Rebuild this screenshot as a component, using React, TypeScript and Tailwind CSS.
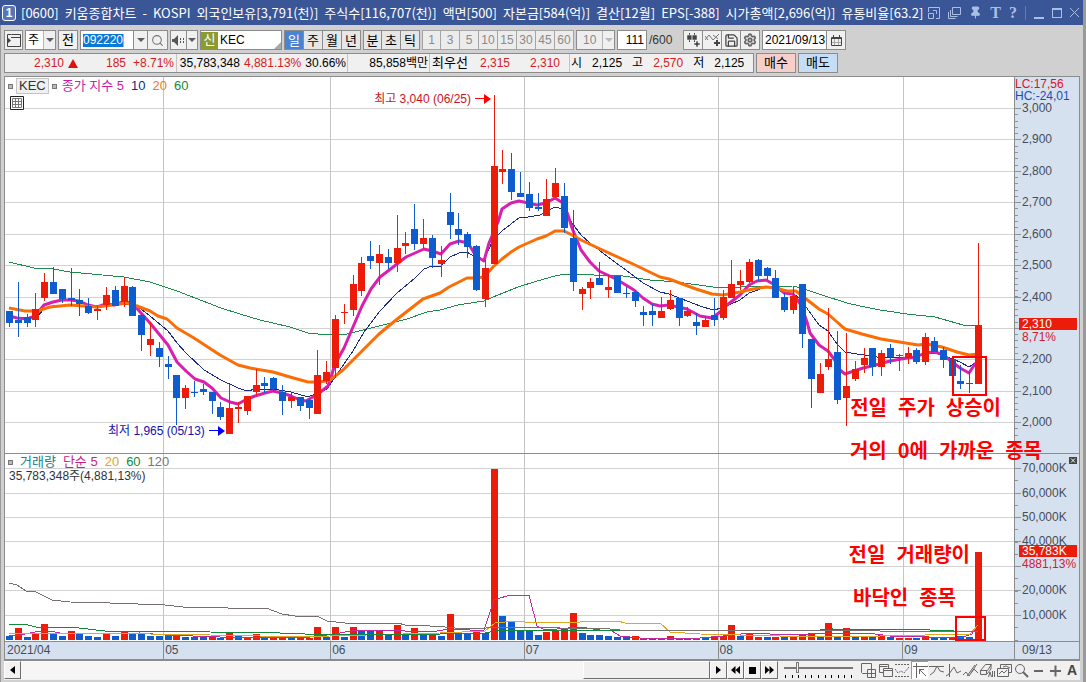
import { useState } from "react";
import type { ReactNode } from "react";
import { Pin, Save, Search, Settings } from "lucide-react";
import clsx from "clsx";
import { twMerge } from "tailwind-merge";

const UP = "#eb1c0a";
const DOWN = "#0f5ccf";

const FIRST_X = 9.5;
const STEP = 8.81;

// direction, wick top, body top, body bottom, wick bottom, volume height, volume direction
type Candle = [string, number, number, number, number, number, string];

const candles: Candle[] = [
  ["d", 311, 311, 323, 327, 4, "d"], ["d", 282, 320, 323, 337, 12, "u"], ["d", 314, 317, 323, 327, 3, "d"],
  ["u", 293, 309, 320, 327, 6, "u"], ["u", 273, 282, 298, 301, 16, "u"], ["d", 267, 282, 294, 294, 6, "d"],
  ["d", 289, 289, 299, 303, 4, "d"], ["d", 268, 298, 300, 306, 9, "u"], ["d", 289, 300, 304, 316, 6, "d"],
  ["d", 298, 306, 313, 314, 4, "d"], ["u", 306, 309, 311, 320, 3, "d"], ["u", 287, 295, 305, 310, 6, "u"],
  ["d", 286, 290, 306, 306, 4, "d"], ["u", 277, 286, 302, 307, 8, "u"], ["d", 286, 287, 316, 316, 6, "d"],
  ["d", 314, 315, 335, 351, 6, "d"], ["u", 322, 339, 345, 356, 4, "d"], ["d", 342, 348, 357, 367, 4, "d"],
  ["d", 356, 364, 367, 379, 4, "d"], ["d", 375, 375, 398, 425, 5, "u"], ["u", 385, 388, 398, 409, 3, "d"],
  ["d", 381, 392, 393, 397, 3, "d"], ["d", 384, 389, 392, 395, 3, "d"], ["d", 392, 392, 401, 414, 4, "u"],
  ["d", 402, 407, 417, 420, 2, "d"], ["u", 384, 408, 434, 434, 8, "u"], ["u", 402, 407, 409, 423, 4, "d"],
  ["u", 396, 396, 411, 415, 3, "u"], ["u", 369, 385, 392, 395, 6, "u"], ["d", 377, 383, 386, 393, 3, "d"],
  ["d", 377, 378, 389, 392, 4, "u"], ["d", 385, 392, 401, 415, 3, "u"], ["u", 393, 397, 401, 408, 2, "d"],
  ["d", 397, 397, 406, 411, 2, "u"], ["d", 399, 400, 408, 419, 2, "u"], ["u", 350, 375, 414, 414, 13, "u"],
  ["u", 361, 372, 381, 384, 3, "d"], ["u", 315, 319, 368, 378, 13, "u"], ["u", 304, 312, 313, 324, 3, "d"],
  ["u", 275, 284, 310, 316, 13, "u"], ["u", 257, 263, 291, 296, 10, "d"], ["d", 241, 256, 261, 269, 10, "d"],
  ["u", 245, 254, 263, 285, 10, "u"], ["d", 249, 257, 263, 269, 6, "d"], ["u", 215, 248, 263, 272, 15, "u"],
  ["u", 232, 243, 246, 254, 5, "d"], ["d", 204, 229, 244, 250, 12, "u"], ["u", 219, 238, 244, 248, 6, "d"],
  ["d", 235, 238, 258, 268, 5, "u"], ["u", 246, 260, 264, 277, 4, "d"], ["d", 193, 212, 225, 239, 26, "u"],
  ["d", 213, 229, 235, 245, 6, "d"], ["d", 232, 234, 247, 258, 6, "d"], ["d", 245, 246, 290, 291, 8, "u"],
  ["u", 260, 268, 299, 307, 7, "d"], ["u", 95, 166, 264, 264, 171, "u"], ["u", 150, 169, 172, 184, 24, "d"],
  ["d", 153, 169, 192, 200, 18, "d"], ["d", 172, 193, 197, 197, 9, "d"], ["d", 182, 194, 208, 211, 10, "d"],
  ["d", 193, 207, 209, 211, 5, "d"], ["u", 179, 199, 216, 216, 8, "u"], ["u", 168, 183, 197, 198, 10, "u"],
  ["d", 183, 196, 228, 233, 12, "u"], ["d", 210, 238, 282, 291, 27, "u"], ["u", 287, 289, 294, 310, 7, "d"],
  ["u", 278, 282, 288, 299, 5, "d"], ["d", 262, 278, 285, 285, 5, "d"], ["u", 275, 287, 290, 298, 4, "d"],
  ["d", 276, 276, 293, 293, 3, "d"], ["d", 287, 293, 294, 298, 3, "d"], ["d", 290, 292, 301, 307, 4, "u"],
  ["d", 306, 312, 315, 326, 2, "u"], ["d", 304, 311, 315, 326, 2, "d"], ["u", 297, 311, 318, 318, 2, "u"],
  ["u", 290, 300, 309, 310, 4, "u"], ["d", 298, 298, 318, 326, 2, "d"], ["u", 307, 311, 316, 317, 2, "d"],
  ["d", 313, 322, 326, 335, 2, "u"], ["u", 317, 320, 327, 327, 2, "d"], ["d", 298, 315, 320, 326, 4, "u"],
  ["u", 290, 297, 318, 320, 4, "u"], ["u", 260, 284, 298, 298, 15, "u"], ["u", 270, 281, 285, 290, 4, "d"],
  ["u", 259, 262, 282, 283, 6, "u"], ["d", 259, 260, 276, 281, 3, "u"], ["d", 267, 268, 276, 280, 3, "d"],
  ["d", 270, 278, 298, 298, 3, "u"], ["d", 293, 297, 310, 312, 3, "d"], ["u", 286, 296, 310, 314, 4, "u"],
  ["d", 284, 284, 334, 348, 6, "u"], ["d", 339, 339, 379, 408, 7, "u"], ["u", 363, 374, 393, 393, 3, "d"],
  ["u", 308, 359, 367, 370, 17, "u"], ["d", 331, 352, 400, 404, 4, "d"], ["u", 333, 386, 398, 426, 12, "u"],
  ["u", 361, 369, 379, 381, 4, "d"], ["u", 348, 358, 365, 373, 4, "u"], ["d", 348, 348, 367, 376, 3, "d"],
  ["u", 350, 353, 367, 376, 5, "u"], ["d", 344, 348, 357, 364, 3, "d"], ["u", 354, 355, 356, 371, 2, "u"],
  ["u", 347, 353, 358, 364, 2, "u"], ["d", 348, 350, 362, 364, 2, "d"], ["u", 333, 337, 362, 365, 4, "u"],
  ["d", 337, 341, 352, 352, 3, "d"], ["d", 347, 350, 360, 368, 2, "d"], ["d", 358, 359, 376, 379, 3, "u"],
  ["d", 365, 381, 384, 389, 4, "d"], ["d", 372, 383, 384, 393, 3, "d"], ["u", 243, 325, 384, 384, 88, "u"],
];

const priceLines = [
  {
    name: "60",
    color: "#1f8a4d",
    width: 1,
    points:
      "9,262 34,268 53,269 70,272 124,277 150,282 177,291 221,308 240,314 260,320 290,327 308,333 327,335 347,334 363,330 387,324 407,319 427,312 440,310 458,305 484,301 493,297 518,287 537,281 555,276 565,274 623,276 650,280 677,282 713,287 740,287 793,286 801,288 822,295 847,303 860,306 880,310 907,314 935,317 963,325 978,326",
  },
  {
    name: "10",
    color: "#1b2a86",
    width: 1,
    points:
      "9,317 26,318 38,316 44,309 53,306 62,305 100,306 133,304 141,309 150,316 168,331 177,343 186,353 204,370 221,380 238,388 247,391 256,389 273,389 291,392 308,397 327,389 333,380 344,364 353,351 364,332 380,311 397,293 415,278 424,269 432,266 441,266 450,257 459,253 467,252 475,257 484,260 493,240 502,231 511,224 519,218 528,217 540,215 555,207 563,209 572,223 581,235 590,243 608,257 634,276 643,283 660,292 669,294 700,306 713,310 722,308 740,300 749,293 766,287 775,288 784,293 793,293 801,300 819,325 828,331 837,344 845,352 857,354 877,357 907,357 920,355 934,353 942,355 960,362 969,367 978,361",
  },
  {
    name: "5",
    color: "#d81fae",
    width: 3,
    points:
      "9,316 17,318 27,319 35,316 44,305 53,302 62,300 70,300 79,301 88,305 97,307 106,304 115,305 124,301 133,304 141,313 150,323 159,334 168,345 177,362 186,371 195,379 204,382 212,388 221,398 230,402 238,404 247,399 255,396 265,393 273,391 282,393 291,396 300,400 306,401 318,394 328,386 332,374 335,364 344,348 353,327 362,306 371,289 380,277 388,271 397,264 406,257 415,253 424,249 432,251 441,254 450,244 459,241 468,243 476,256 484,261 489,243 498,222 502,209 511,203 519,201 528,203 537,205 546,203 555,198 563,203 568,215 572,228 581,250 590,262 599,271 616,279 634,290 643,298 652,304 660,306 669,305 687,309 700,316 712,318 720,312 727,305 740,295 749,285 757,281 766,280 775,285 784,293 793,294 801,305 807,322 810,333 819,345 828,351 837,363 840,370 845,374 854,371 863,368 872,366 890,361 907,358 916,357 925,353 934,352 942,354 951,361 960,368 969,373 975,364 978,362",
  },
  {
    name: "20",
    color: "#fb6d05",
    width: 3,
    points:
      "9,308 25,311 37,311 50,307 70,305 97,307 127,303 137,306 150,311 158,316 167,319 177,328 194,338 220,355 238,365 250,368 273,372 290,377 308,382 320,382 330,380 343,370 379,334 396,320 423,299 440,293 449,287 467,278 475,278 484,277 493,267 502,259 511,252 519,247 537,239 546,236 555,231 564,231 572,235 581,240 598,248 633,264 660,277 669,279 696,289 712,294 723,295 740,292 753,289 766,287 775,288 787,291 796,291 801,295 810,302 819,309 828,314 837,322 845,329 862,334 881,339 918,345 927,344 942,347 957,352 969,355 978,354",
  },
];

const volumeLines = [
  {
    name: "5",
    color: "#c02ba5",
    points:
      "9,635 20,635 35,632 50,631 60,633 97,634 140,633 165,635 220,637 310,637 335,634 345,632 360,630 380,630 430,632 450,629 470,630 484,630 488,618 494,600 510,595 529,595 537,626 545,630 580,627 600,630 612,631 620,636 640,638 700,638 723,636 750,633 790,635 830,633 868,633 890,636 960,638 972,634 976,627",
  },
  {
    name: "20",
    color: "#e0a820",
    points:
      "9,633 100,633 150,634 210,635 260,636 290,637 330,636 440,633 485,631 495,623 515,621 525,622 580,622 590,621 618,621 625,623 660,623 670,632 700,634 780,636 880,636 970,634 978,625",
  },
  {
    name: "60",
    color: "#12893c",
    points:
      "9,624 28,625 36,627 70,627 105,631 163,631 210,632 280,633 330,635 440,634 485,633 500,630 820,630 832,629 930,630 978,632",
  },
  {
    name: "120",
    color: "#77706e",
    points:
      "9,583 17,585 26,591 36,592 52,600 70,602 110,603 165,605 183,607 225,607 228,608 266,608 282,614 295,616 317,616 327,621 345,623 398,623 405,625 430,626 445,627 455,628 486,628 495,627 530,627 560,628 610,629 620,630 680,630 880,631 978,632",
  },
];

const monthX = [163, 330, 524, 718, 903];
const priceTicks = [
  { y: 108, label: "3,000" },
  { y: 139, label: "2,900" },
  { y: 171, label: "2,800" },
  { y: 202, label: "2,700" },
  { y: 234, label: "2,600" },
  { y: 265, label: "2,500" },
  { y: 297, label: "2,400" },
  { y: 328, label: "" },
  { y: 359, label: "2,200" },
  { y: 391, label: "2,100" },
  { y: 422, label: "2,000" },
];
const volumeTicks = [
  { y: 468, label: "70,000K" },
  { y: 493, label: "60,000K" },
  { y: 517, label: "50,000K" },
  { y: 541, label: "40,000K" },
  { y: 566, label: "" },
  { y: 590, label: "20,000K" },
  { y: 615, label: "10,000K" },
];

const barX = (i: number) => Math.round(FIRST_X + STEP * i - 0.5);

function Grid({ ticks, top, bottom }: { ticks: { y: number }[]; top: number; bottom: number }) {
  return (
    <g fill="#d2d2d2">
      {ticks.map((t) => (
        <rect key={t.y} x={5} y={t.y} width={1009} height={1} />
      ))}
      {monthX.map((x) => (
        <rect key={x} x={x} y={top} width={1} height={bottom - top} fill="#c4c4c4" />
      ))}
    </g>
  );
}

function PricePlot() {
  return (
    <svg className="block h-[376px] w-full" viewBox="5 77 1009 376" preserveAspectRatio="none" aria-label="KEC 일봉">
      <Grid ticks={priceTicks} top={77} bottom={453} />
      {priceLines.map((l) => (
        <polyline
          key={l.name}
          points={l.points}
          fill="none"
          stroke={l.color}
          strokeWidth={l.width}
          strokeLinejoin="round"
          shapeRendering={l.width === 1 ? "crispEdges" : undefined}
        />
      ))}
      {candles.map(([dir, high, top, bottom, low], i) => (
        <g key={i} fill={dir === "u" ? UP : DOWN}>
          <rect x={barX(i)} y={high} width={1} height={low - high} />
          <rect x={barX(i) - 3} y={top} width={7} height={bottom - top} />
        </g>
      ))}
      <rect x={953} y={357} width={33} height={38} fill="none" stroke="#ff0000" strokeWidth={2} />
    </svg>
  );
}

function VolumePlot() {
  return (
    <svg className="block h-[187px] w-full" viewBox="5 454 1009 187" preserveAspectRatio="none" aria-label="거래량">
      <Grid ticks={volumeTicks} top={454} bottom={641} />
      {candles.map(([, , , , , vol, dir], i) => (
        <rect key={i} x={barX(i) - 3} y={640 - vol} width={7} height={vol} fill={dir === "u" ? UP : DOWN} />
      ))}
      {volumeLines.map((l) => (
        <polyline key={l.name} points={l.points} fill="none" stroke={l.color} strokeWidth={1} shapeRendering="crispEdges" />
      ))}
      <rect x={956} y={617} width={29} height={23} fill="none" stroke="#ff0000" strokeWidth={2} />
    </svg>
  );
}

function Axis({ ticks, top, height, minor }: { ticks: { y: number; label: string }[]; top: number; height: number; minor: number }) {
  const minors: number[] = [];
  for (let y = ticks[0].y; y < top + height; y += minor) minors.push(Math.round(y));
  return (
    <svg className="block" width={64} height={height} viewBox={`0 ${top} 64 ${height}`}>
      {minors.map((y) => (
        <rect key={y} x={0} y={y} width={3} height={1} fill="#8d939c" />
      ))}
      {ticks.map((t) => (
        <g key={t.y}>
          <rect x={0} y={t.y} width={6} height={1} fill="#8d939c" />
          <text x={7} y={t.y + 4} fill="#474d57" fontSize={12}>
            {t.label}
          </text>
        </g>
      ))}
    </svg>
  );
}

function Btn({ children, label, className }: { children: ReactNode; label?: string; className?: string }) {
  return (
    <button
      type="button"
      aria-label={label}
      className={twMerge("flex h-5 items-center justify-center border border-[#8c8c8c] bg-[#f0f0f0] text-[13px] text-black", className)}
    >
      {children}
    </button>
  );
}

function Caret({ light }: { light?: boolean }) {
  return (
    <svg width="8" height="4" viewBox="0 0 8 4">
      <path d="M0 0h8L4 4z" fill={light ? "#b9b9b9" : "#5c5c5c"} />
    </svg>
  );
}

function Drop({ label, value, className, muted }: { label: string; value: string; className: string; muted?: boolean }) {
  return (
    <div className={clsx("relative h-5 border border-[#8c8c8c]", muted ? "bg-[#eeeeee] text-[#8a8a8a]" : "bg-white", className)}>
      <select aria-label={label} className="h-full w-full appearance-none outline-none">
        <option>{value}</option>
      </select>
      <span className="pointer-events-none absolute inset-y-0 right-0 flex w-3 items-center justify-center border-l border-[#b5b5b5] bg-[#f0f0f0]">
        <Caret light={muted} />
      </span>
    </div>
  );
}

function TitleBar() {
  return (
    <header className="flex h-[25px] items-center bg-[#3a5697] pr-1 pl-[2px] text-white">
      <span className="flex h-4 w-[14px] items-center justify-center rounded-[3px] border border-white bg-[#5876b4] text-[12px] font-bold">1</span>
      <h1 className="ml-[5px] flex gap-[6px] font-['Noto_Sans_CJK_KR',sans-serif] text-[13px] whitespace-nowrap">
        <span>[0600]</span>
        <span>키움종합차트</span>
        <span>-</span>
        <span>KOSPI</span>
        <span>외국인보유[3,791(천)]</span>
        <span>주식수[116,707(천)]</span>
        <span>액면[500]</span>
        <span>자본금[584(억)]</span>
        <span>결산[12월]</span>
        <span>EPS[-388]</span>
        <span>시가총액[2,696(억)]</span>
        <span>유통비율[63.2]</span>
      </h1>
      <div className="ml-auto flex items-center gap-2 text-[#a9bfe6]">
        <button type="button" aria-label="크기">
          <svg width="12" height="12" viewBox="0 0 12 12" fill="none" stroke="currentColor">
            <path d="M.5 5V.5h11v11H8M.5 6.500h5v5h-5zM5 3.500h3.500V7" />
          </svg>
        </button>
        <button type="button" aria-label="복제">
          <svg width="13" height="12" viewBox="0 0 13 12" fill="none" stroke="currentColor">
            <path d="M4.500.5h8v7h-8zM2.500 3v6.500h7M.5 5v6.500h7" />
          </svg>
        </button>
        <button type="button" aria-label="고정">
          <Pin size={13} fill="currentColor" />
        </button>
        <button type="button" className="font-['Liberation_Serif',serif] text-[16px] font-bold">T</button>
        <button type="button" className="font-['Liberation_Serif',serif] text-[16px] font-bold">?</button>
        <span className="h-3.5 w-px bg-[#5f7cb8]" />
        <button type="button" aria-label="최소화" className="h-3 w-2.5 border-b-2 border-current" />
        <button type="button" aria-label="최대화" className="h-2.5 w-2.5 border border-t-2 border-current" />
        <button type="button" aria-label="닫기">
          <svg width="9" height="9" viewBox="0 0 9 9" stroke="currentColor">
            <path d="M0 0l9 9M9 0L0 9" />
          </svg>
        </button>
      </div>
    </header>
  );
}

const periods = ["일", "주", "월", "년"];
const units = ["분", "초", "틱"];
const minutes = ["1", "3", "5", "10", "15", "30", "45", "60"];

function Toolbar() {
  const [period, setPeriod] = useState("일");
  return (
    <div className="flex h-5 items-center gap-[2px] text-[12px]">
      <Btn label="메뉴" className="w-[19px]">
        <svg width="14" height="13" viewBox="0 0 14 13">
          <path d="M4.500.5h9v12h-13V9M.5 4V.5h4M4 3.500h9" fill="none" stroke="#444" />
          <path d="M0 3l4 3.500L0 10z" fill="#444" />
        </svg>
      </Btn>
      <Drop label="종류" value="주" className="w-[31px] pl-[2px]" />
      <Btn className="w-5">전</Btn>
      <div className="flex">
        <div className="flex h-5 w-[54px] items-center border border-[#8c8c8c] bg-white pl-[2px]">
          <input
            aria-label="종목코드"
            defaultValue="092220"
            className="h-[13px] w-[41px] border-r border-[#f0a060] bg-[#0a78d7] text-white outline-none"
          />
        </div>
        <Btn label="코드 목록" className="w-[14px] border-l-0">
          <Caret />
        </Btn>
        <Btn label="종목검색" className="w-5 border-l-0">
          <Search size={13} color="#777" />
        </Btn>
      </div>
      <div className="flex">
        <Btn label="소리" className="w-[17px]">
          <svg width="13" height="11" viewBox="0 0 13 11" fill="#555">
            <path d="M0 4h2l4-4v11L2 7H0zM8 3h1v2H8zM8 6h1v2H8zM11 3h1v2h-1zM11 6h1v2h-1z" />
          </svg>
        </Btn>
        <Btn label="소리 설정" className="w-[11px] border-l-0">
          <Caret />
        </Btn>
      </div>
      <div className="relative flex h-5 w-[82px] items-center border border-[#8c8c8c] bg-white">
        <span className="flex h-[17px] w-[17px] items-center justify-center bg-[#8c9a2e] text-[13px] text-white">신</span>
        <span className="pl-[2px]">KEC</span>
        <svg className="absolute right-0 bottom-0" width="7" height="7">
          <path d="M7 0v7H0z" fill="#a8a8a8" />
        </svg>
      </div>
      <div className="flex text-[13px]">
        {periods.map((p) => (
          <button
            key={p}
            type="button"
            onClick={() => setPeriod(p)}
            className={clsx(
              "h-5 w-[19px] border-y border-r border-[#8c8c8c] first:w-5 first:border-l",
              p === period ? "bg-[#4a83cf] text-white" : "bg-[#e6e6e6]",
            )}
          >
            {p}
          </button>
        ))}
      </div>
      <div className="flex text-[13px]">
        {units.map((u) => (
          <button key={u} type="button" className="h-5 w-[19px] border-y border-r border-[#8c8c8c] bg-[#e6e6e6] first:border-l">
            {u}
          </button>
        ))}
      </div>
      <div className="flex text-[#8a8a8a]">
        {minutes.map((m) => (
          <button key={m} type="button" className="h-5 w-[19px] border-y border-r border-[#a5a5a5] bg-[#ececec] first:border-l">
            {m}
          </button>
        ))}
      </div>
      <Drop label="분" value="10" muted className="w-[39px] pl-1.5" />
      <input aria-label="봉 개수" defaultValue="111" className="h-5 w-[30px] border border-[#8c8c8c] bg-white pr-[2px] text-right outline-none" />
      <span className="w-[32px] text-[#333]">/600</span>
      <div className="flex">
        <Btn label="봉 추가" className="w-[20px]">
          <svg width="15" height="14" viewBox="0 0 15 14">
            <path d="M3.500 0v9M8.500 0v9" stroke="#444" />
            <path d="M1 2h5v5H1zM6 2h5v5H6zM10 8h2v2h2v2h-2v2h-2v-2H8v-2h2z" fill="#444" stroke="#f0f0f0" strokeWidth=".5" />
          </svg>
        </Btn>
        <Btn label="지표 추가" className="w-[19px] border-l-0">
          <svg width="15" height="14" viewBox="0 0 15 14">
            <path d="M0 7l4-5 4 5 6-6M0 3l3 4M8 2l5 4" fill="none" stroke="#777" />
            <path d="M11 7h2v2h2v2h-2v2h-2v-2H9V9h2z" fill="#444" />
          </svg>
        </Btn>
        <Btn label="저장" className="w-[19px] border-l-0">
          <Save size={15} color="#444" />
        </Btn>
        <Btn label="설정" className="w-[19px] border-l-0">
          <Settings size={14} strokeWidth={3} color="#666" />
        </Btn>
      </div>
      <div className="flex">
        <input aria-label="날짜" defaultValue="2021/09/13" className="h-5 w-[65px] border border-[#8c8c8c] bg-white pl-[2px] outline-none" />
        <Btn label="달력" className="w-[19px] border-l-0">
          <svg width="11" height="11" viewBox="0 0 11 11" fill="none" stroke="#444">
            <path d="M.5 2.500h10v8H.5zM.5 3.500h10M2.500 0v2M8.500 0v2" />
            <path d="M3.500 4v6M7.500 4v6M1 7.500h9" stroke="#aaa" />
          </svg>
        </Btn>
      </div>
    </div>
  );
}

function QuoteBar() {
  return (
    <div className="mt-[3px] flex h-5 gap-[2px] text-[12px] whitespace-nowrap">
      <div className="flex h-5 w-[750px] items-center border border-[#8c8c8c] bg-[#f0f0f0] text-black">
        <div className="flex h-full w-[172px] items-center border-r border-[#c4c4c4] text-[#d42020]">
          <span className="w-[59px] text-right">2,310</span>
          <svg className="ml-1" width="10" height="9">
            <path d="M5 0l5 9H0z" fill="#e01010" />
          </svg>
          <span className="w-12 text-right">185</span>
          <span className="w-12 text-right">+8.71%</span>
        </div>
        <div className="flex h-full w-[171px] items-center justify-end gap-1 border-r border-[#c4c4c4] pr-px">
          <span>35,783,348</span>
          <span className="text-[#d42020]">4,881.13%</span>
          <span>30.66%</span>
        </div>
        <div className="flex h-full w-[82px] items-center justify-end border-r border-[#c4c4c4] pr-px">85,858백만</div>
        <div className="flex h-full w-[140px] items-center border-r border-[#c4c4c4] pl-[2px]">
          <span className="w-9 text-[13px]">최우선</span>
          <span className="w-[42px] text-right text-[#d42020]">2,315</span>
          <span className="w-[50px] text-right text-[#d42020]">2,310</span>
        </div>
        <div className="flex items-center gap-[10px] pl-px">
          <span>시</span>
          <span>2,125</span>
          <span>고</span>
          <span className="text-[#d42020]">2,570</span>
          <span>저</span>
          <span>2,125</span>
        </div>
      </div>
      <Btn className="w-10 bg-[#f8cfc8]">매수</Btn>
      <Btn className="w-10 bg-[#c5ddf5]">매도</Btn>
    </div>
  );
}

function Dot() {
  return <span className="h-[5px] w-[5px] border border-[#777] bg-[#bbb]" />;
}

function Note({ words, className }: { words: string[]; className: string }) {
  return (
    <p
      className={clsx(
        "absolute flex gap-[11px] font-['Noto_Sans_CJK_KR',sans-serif] text-[20px] leading-6 font-bold whitespace-nowrap text-[#ff0000]",
        className,
      )}
    >
      {words.map((w) => (
        <span key={w}>{w}</span>
      ))}
    </p>
  );
}

function Chart() {
  return (
    <main className="relative mt-[3px] border border-[#8c8c8c] bg-white text-[12px]">
      <section className="relative flex border-b border-[#8c8c8c]">
        <div className="min-w-0 flex-1">
          <PricePlot />
        </div>
        <div className="relative w-[65px] border-l border-[#8c8c8c] bg-[#d6e1f0]">
          <Axis ticks={priceTicks} top={77} height={376} minor={6.28} />
          <div className="absolute inset-x-0 top-px bg-[#d6e1f0] leading-3">
            <div className="text-[#e01020]">LC:17,56</div>
            <div className="text-[#1450b8]">HC:-24,01</div>
          </div>
          <div className="absolute top-[241px] right-[2px] left-1 bg-[#eb1c0a] pl-[3px] leading-3 text-white">2,310</div>
          <div className="absolute top-[254px] left-[7px] leading-3 text-[#d0202c]">8,71%</div>
        </div>

        <div className="absolute top-px left-[3px] flex items-center gap-[3px] text-[13px] leading-[14px]">
          <Dot />
          <span className="border border-[#c4c4c4] bg-[#f0f0f0] px-[2px] text-[#333]">KEC</span>
          <Dot />
          <div className="flex gap-[7px] pl-[2px]">
            <span className="text-[#c81eaa]">종가 지수 5</span>
            <span className="text-[#1b2a86]">10</span>
            <span className="text-[#f07818]">20</span>
            <span className="text-[#12893c]">60</span>
          </div>
        </div>
        <button type="button" aria-label="데이터 표" className="absolute top-[19px] left-[5px]">
          <svg width="14" height="14" viewBox="0 0 14 14" fill="none">
            <path d="M.5.5h13v13H.5z" fill="#fff" stroke="#222" />
            <path d="M2.500 2.500h9v9h-9zM5.500 2.500v9M8.500 2.500v9M2.500 5.500h9M2.500 8.500h9" stroke="#777" />
          </svg>
        </button>
        <div className="absolute top-[14px] right-[587px] flex items-center gap-1 leading-4 text-[#c8141e]">
          최고 3,040 (06/25)
          <svg width="17" height="10">
            <path d="M0 4.500h10" stroke="#f00" />
            <path d="M9 0l7 5-7 5z" fill="#f00" />
          </svg>
        </div>
        <div className="absolute top-[346px] left-[103px] flex items-center gap-1 leading-4 text-[#1410a8]">
          최저 1,965 (05/13)
          <svg width="17" height="10">
            <path d="M0 4.500h10" stroke="#00f" />
            <path d="M9 0l7 5-7 5z" fill="#00f" />
          </svg>
        </div>
      </section>

      <section className="relative flex">
        <div className="min-w-0 flex-1">
          <VolumePlot />
        </div>
        <div className="relative w-[65px] border-l border-[#8c8c8c] bg-[#d6e1f0]">
          <Axis ticks={volumeTicks} top={454} height={187} minor={12.25} />
          <button type="button" aria-label="닫기" className="absolute top-[3px] right-[2px] bg-[#444]">
            <svg className="block" width="8" height="7">
              <path d="M2 1.500l4 4M6 1.500l-4 4" stroke="#fff" />
            </svg>
          </button>
          <div className="absolute top-[91px] right-[2px] left-1 bg-[#eb1c0a] pl-[3px] leading-3 text-white">35,783K</div>
          <div className="absolute top-[104px] left-[7px] leading-3 text-[#d0202c]">4881,13%</div>
        </div>

        <div className="absolute top-px left-[3px] leading-[14px]">
          <div className="flex items-center gap-[7px] text-[13px]">
            <Dot />
            <span className="text-[#178088]">거래량</span>
            <span className="text-[#c81e8c]">단순 5</span>
            <span className="text-[#dca51e]">20</span>
            <span className="text-[#12893c]">60</span>
            <span className="text-[#777]">120</span>
          </div>
          <div className="pl-px text-[#333]">35,783,348주(4,881,13%)</div>
        </div>
      </section>

      <div className="flex h-[19px] border-y border-[#8c8c8c] bg-[#d6e1f0] leading-4 text-[#474d57]">
        <div className="flex min-w-0 flex-1">
          <span className="grow-[158] basis-0 pl-[2px]">2021/04</span>
          <span className="grow-[167] basis-0 border-l border-[#8c8c8c] pl-px">05</span>
          <span className="grow-[194] basis-0 border-l border-[#8c8c8c] pl-px">06</span>
          <span className="grow-[194] basis-0 border-l border-[#8c8c8c] pl-px">07</span>
          <span className="grow-[185] basis-0 border-l border-[#8c8c8c] pl-px">08</span>
          <span className="grow-[111] basis-0 border-l border-[#8c8c8c] pl-px">09</span>
        </div>
        <span className="w-[65px] border-l border-[#8c8c8c] pl-[7px]">09/13</span>
      </div>

      <Note className="top-[318px] right-[78px]" words={["전일", "주가", "상승이"]} />
      <Note className="top-[361px] right-[37px]" words={["거의", "0에", "가까운", "종목"]} />
      <Note className="top-[465px] right-[109px]" words={["전일", "거래량이"]} />
      <Note className="top-[508px] right-[123px]" words={["바닥인", "종목"]} />
    </main>
  );
}

const raised = "flex h-[18px] w-[17px] items-center justify-center border border-t-white border-l-white border-r-[#6e6e6e] border-b-[#6e6e6e] bg-[#f2f2f2]";

const tools: { label: string; art: ReactNode }[] = [
  { label: "차트 추가", art: <path d="M7 10.500H1.500l-1-1v-9h10V6M6.500 6.500h8v8h-8zM10.500 7v7M7 10.500h7" /> },
  { label: "창 겹치기", art: <path d="M5 9.500H1.500v-8h9V5M5.500 5.500h9v8h-9zM5.500 7.500h9M1.500 3.500h8" /> },
  { label: "격자", art: <><path d="M0 1.500h15M0 13.500h15" strokeDasharray="2 1" /><path d="M0 6l3 4 3-2 3 2 5-6" strokeDasharray="2 1" /></> },
  { label: "십자선", art: <><path d="M0 3.500h15M3.500 0v15" /><path d="M6 6l7 7M6.500 11V6.500H11" /></> },
  { label: "추세선", art: <path d="M0 3.500h15M1 12l4-3 3-6 3 5 4 1" /> },
  { label: "수직선", art: <path d="M3.500 1v13M0 13l3-2 5-7 3 6 4-2" /> },
  { label: "그리기", art: <path d="M0 12l3-3 3 4 8-12M4 13L12 2M8 10l3-4 4 4" /> },
  { label: "모두 지우기", art: <><path d="M.5 7.500l5-6h6l-4 6zM.5 7.500v4h6v-4M7 11l4-5V2" /><path d="M8.500 14l1.500-5 1.500 5M12.500 8v6M14.500 8v6" /></> },
  { label: "차트 저장", art: <path d="M3.500 5V1.500h11v8H12M.5 5.500h11v8H.500zM2 11l3-3 2 2 3-3M6 4l3-1 4 2" /> },
  { label: "확대경", art: <><circle cx="6" cy="6" r="4.500" /><path d="M9 9l5 5" strokeWidth="2" /></> },
  { label: "축소", art: <path d="M3 8h9" strokeWidth="2" /> },
  { label: "확대", art: <path d="M2 8h11M7.500 2.500v11" strokeWidth="2" /> },
];

function ScrollRow() {
  return (
    <footer className="flex h-[19px] items-start bg-[#f0f0f0]">
      <button type="button" aria-label="왼쪽" className={raised}>
        <svg width="5" height="8"><path d="M5 0v8L0 4z" /></svg>
      </button>
      <div className="flex h-[18px] min-w-0 flex-1 justify-end bg-[#f7f6f7]">
        <div className="h-[18px] w-[127px] border border-t-white border-l-white border-r-[#6e6e6e] border-b-[#6e6e6e] bg-[#f0f0f0]" />
      </div>
      <button type="button" aria-label="오른쪽" className={raised}>
        <svg width="5" height="8"><path d="M0 0v8l5-4z" /></svg>
      </button>
      <button type="button" aria-label="뒤로" className={raised}>
        <svg width="9" height="8"><path d="M4.500 0v8L0 4zM9 0v8L4.500 4z" /></svg>
      </button>
      <button type="button" aria-label="정지" className={raised}>
        <svg width="7" height="7"><path d="M0 0h7v7H0z" /></svg>
      </button>
      <button type="button" aria-label="앞으로" className={raised}>
        <svg width="9" height="8"><path d="M0 0v8l4.500-4zM4.500 0v8L9 4z" /></svg>
      </button>
      <div className="ml-[6px] w-[69px] pt-px">
        <input
          type="range"
          aria-label="속도"
          defaultValue={18}
          className="block h-[11px] w-full appearance-none bg-[linear-gradient(#777,#777)] bg-[length:100%_2px] bg-center bg-no-repeat [&::-webkit-slider-thumb]:h-[11px] [&::-webkit-slider-thumb]:w-[3px] [&::-webkit-slider-thumb]:appearance-none [&::-webkit-slider-thumb]:border [&::-webkit-slider-thumb]:border-[#777] [&::-webkit-slider-thumb]:bg-[#f0f0f0]"
        />
        <div className="mt-[2px] flex justify-between px-px">
          {Array.from({ length: 11 }, (_, i) => (
            <span key={i} className="h-[3px] w-px bg-black" />
          ))}
        </div>
      </div>
      <div className="ml-[7px] flex">
        {tools.map((t) => (
          <button
            key={t.label}
            type="button"
            aria-label={t.label}
            className={clsx("flex h-[18px] w-[17px] items-center justify-center", t.label === "십자선" && "border-t border-l border-[#999] bg-white")}
          >
            <svg width="15" height="15" viewBox="0 0 15 15" fill="none" stroke="#666">
              {t.art}
            </svg>
          </button>
        ))}
        <button type="button" className="h-[18px] w-4 text-[14px] leading-[18px] font-bold text-[#444]">
          A
        </button>
      </div>
    </footer>
  );
}

export default function App() {
  return (
    <div className="min-h-screen border-r-[3px] border-b-2 border-[#9a9a9a] bg-[#d0d0d0] font-['Liberation_Sans','Noto_Sans_CJK_KR',sans-serif]">
      <TitleBar />
      <div className="border-l border-[#9a9a9a] pt-[5px] pr-[3px] pb-[2px] pl-[3px]">
        <Toolbar />
        <QuoteBar />
        <Chart />
        <ScrollRow />
      </div>
    </div>
  );
}
